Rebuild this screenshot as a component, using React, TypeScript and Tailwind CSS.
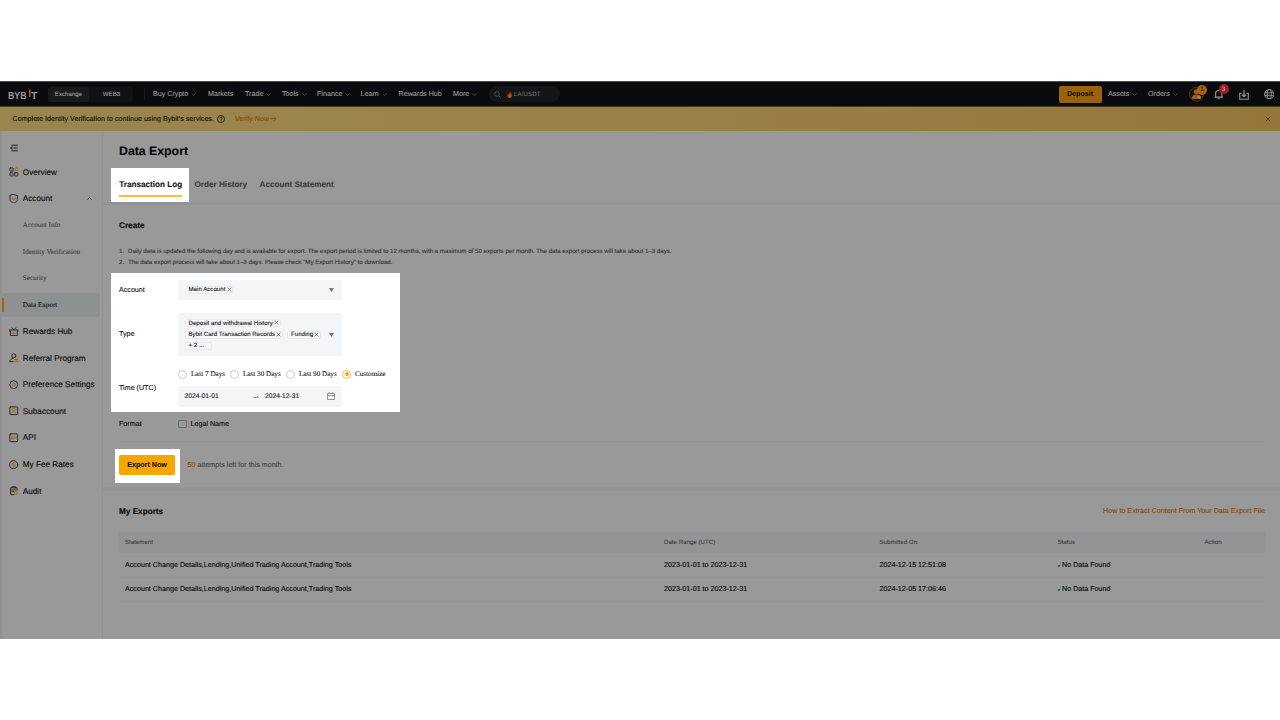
import type { ReactNode } from "react";

const stroke = {
  fill: "none",
  stroke: "#202227",
  strokeWidth: 1.55,
  strokeLinecap: "round" as const,
  strokeLinejoin: "round" as const,
};
const amber = "#b0680a";

function Icon({ children }: { children: ReactNode }) {
  return (
    <svg viewBox="0 0 16 16" className="mb-[0.5px] h-[9.5px] w-[9.5px] shrink-0" {...stroke}>
      {children}
    </svg>
  );
}

function Chevron({ up = false, className = "" }: { up?: boolean; className?: string }) {
  return (
    <svg viewBox="0 0 10 6" className={`h-[3px] w-[5px] shrink-0 ${className}`} fill="none" stroke="currentColor" strokeWidth="1.6">
      <path d={up ? "M1 5l4-4 4 4" : "M1 1l4 4 4-4"} />
    </svg>
  );
}

function Cross({ className }: { className: string }) {
  return (
    <svg viewBox="0 0 8 8" className={`shrink-0 ${className}`} fill="none" stroke="currentColor" strokeWidth="1.1">
      <path d="M1 1l6 6M7 1l-6 6" />
    </svg>
  );
}

const navItems = [
  { label: "Buy Crypto", width: "w-[55px]", menu: true },
  { label: "Markets", width: "w-[37px]", menu: false },
  { label: "Trade", width: "w-[37px]", menu: true },
  { label: "Tools", width: "w-[35px]", menu: true },
  { label: "Finance", width: "w-[43.5px]", menu: true },
  { label: "Learn", width: "w-[38px]", menu: true },
  { label: "Rewards Hub", width: "w-[54.5px]", menu: false },
  { label: "More", width: "w-[36px]", menu: true },
];

function Header() {
  return (
    <header className="flex h-[26px] items-center border-t border-b border-t-[#465048] border-b-[#453b22] bg-[#0a0b0f] text-[7.15px] text-[#999999]">
      <div className="flex w-[48px] items-center pl-[8px]">
        <svg viewBox="0 0 30 12" className="h-[12px] w-[30px] overflow-visible">
          <g fill="#999999" fontFamily="Liberation Sans" fontWeight="700" fontSize="10.2">
            <text x="0" y="11.3" textLength="18.6" lengthAdjust="spacingAndGlyphs">BYB</text>
            <text x="23" y="11.3" textLength="6.4" lengthAdjust="spacingAndGlyphs">T</text>
          </g>
          <rect x="21" y="1.5" width="1.5" height="7.5" fill="#a86a00" />
        </svg>
      </div>
      <div className="flex h-[15px] w-[85px] items-center rounded-[2px] bg-[#101114] text-[6.15px]">
        <div className="flex h-full w-[41px] items-center justify-center rounded-[2px] bg-[#191a1d] pt-[1px]">Exchange</div>
        <div className="flex-1 pt-[1px] pl-[1px] text-center">WEB3</div>
      </div>
      <div className="mr-[8.5px] ml-[10.5px] h-[12px] w-px bg-[#191a1e]" />
      <nav className="flex items-center pt-[1px]">
        {navItems.map((item) => (
          <div key={item.label} className={`flex items-center gap-[3px] whitespace-nowrap ${item.width}`}>
            {item.label}
            {item.menu && <Chevron className="text-[#4b4d51]" />}
          </div>
        ))}
      </nav>
      <div className="flex h-[16px] w-[71px] items-center rounded-full bg-[#141518] pl-[4.5px] text-[6.15px] text-[#696b70]">
        <svg viewBox="0 0 14 14" className="h-[7px] w-[7px]" fill="none" stroke="#5a5c60" strokeWidth="1.5">
          <circle cx="6" cy="6" r="4.7" />
          <path d="M9.5 9.5L13 13" />
        </svg>
        <svg viewBox="0 0 10 13" className="mr-[1.5px] ml-[6.5px] h-[7px] w-[5.5px]">
          <path d="M5.4 0C6 2.6 9.7 4.3 9.5 8.3 9.3 11.2 7.4 13 4.9 13 2.2 13 .4 11.1.4 8.5.4 6.3 1.5 5 2.3 3.9l.8 1.7C4.3 4.3 4.8 2.2 5.4 0z" fill="#a52b16" />
          <path d="M5.3 5c.2 1.7 2.4 2.6 2.2 4.7C7.4 11.5 6.3 12.5 5 12.5c-1.5 0-2.6-1-2.6-2.500C2.4 8 4.6 7.2 5.3 5z" fill="#b36a12" />
        </svg>
        <span className="pt-[1px] tracking-[0.08px]">LA/USDT</span>
      </div>
      <div className="flex-1" />
      <div className="flex h-[17px] w-[43px] items-center justify-center rounded-[2px] bg-[#9a6306] pt-[1px] font-bold text-[#17140d]">Deposit</div>
      <div className="ml-[6.5px] flex w-[40px] items-center gap-[3px] pt-[1px]">
        Assets <Chevron className="text-[#4b4d51]" />
      </div>
      <div className="flex w-[40.5px] items-center gap-[3px] pt-[1px]">
        Orders <Chevron className="text-[#4b4d51]" />
      </div>
      <div className="relative w-[25.5px]">
        <svg viewBox="0 0 16 16" className="h-[16px] w-[16px]">
          <circle cx="7.5" cy="8.3" r="7" fill="#15120d" stroke="#60400e" strokeWidth="0.8" />
          <circle cx="7.3" cy="5.8" r="2.6" fill="#a05a1c" />
          <path d="M2.800 13c-.2-3 1.500-4.600 4.300-4.600s4.700 1.500 4.500 4.600z" fill="#a05a1c" />
          <circle cx="10" cy="11.2" r="1.9" fill="#8c8375" />
        </svg>
        <span className="absolute -top-[1px] left-[8.5px] flex h-[10px] w-[10px] items-center justify-center rounded-full bg-[#a5650a] pt-[0.5px] text-[6.5px] text-[#191510]">1</span>
      </div>
      <div className="relative w-[25px]">
        <svg viewBox="0 0 18 20" className="mt-[1px] h-[10.5px] w-[9.5px]" fill="none" stroke="#999999" strokeWidth="2">
          <path d="M1 15.5h16M3 15V9a6 6 0 0 1 12 0v6M7 18.7h4" />
        </svg>
        <span className="absolute -top-[4px] left-[4.5px] flex h-[10px] w-[10px] items-center justify-center rounded-full bg-[#9b201f] pt-[0.5px] text-[6.5px] text-[#aaa]">3</span>
      </div>
      <svg viewBox="0 0 20 20" className="mt-[1px] mr-[14.5px] h-[10px] w-[10px]" fill="none" stroke="#999999" strokeWidth="2.2">
        <path d="M5.5 6.500H1.500v12h17v-12h-4M10 0v13M6 9.500l4 4 4-4" />
      </svg>
      <svg viewBox="0 0 22 22" className="mr-[6px] h-[10.5px] w-[10.5px]" fill="none" stroke="#999999" strokeWidth="1.9">
        <circle cx="11" cy="11" r="9.8" />
        <ellipse cx="11" cy="11" rx="4.5" ry="9.8" />
        <path d="M1.500 8h19M1.500 14h19" />
      </svg>
    </header>
  );
}

function Banner() {
  return (
    <div className="flex h-[24px] items-center bg-linear-to-r from-[#99874f] via-[#998149] to-[#96763b] pl-[12.5px] text-[7.15px] text-[#100f0b]">
      <span>Complete Identity Verification to continue using Bybit's services.</span>
      <svg viewBox="0 0 16 16" className="ml-[3px] h-[8px] w-[8px]" fill="none" stroke="#1d1a12" strokeWidth="1.7">
        <circle cx="8" cy="8" r="7" />
        <path d="M5.7 6.3C5.7 4.9 6.7 4 8 4s2.3.9 2.300 2.200c0 1.700-2.300 1.700-2.300 3.300M8 11v1.300" />
      </svg>
      <span className="ml-[10px] text-[#90480a]">Verify Now</span>
      <svg viewBox="0 0 12 10" className="ml-[1px] h-[5.5px] w-[6.5px]" fill="none" stroke="#90480a" strokeWidth="1.6">
        <path d="M0 5h11M7 1l4 4-4 4" />
      </svg>
      <div className="flex-1" />
      <Cross className="mr-[9px] h-[6px] w-[6px] text-[#4d3f24]" />
    </div>
  );
}

const icons: Record<string, ReactNode> = {
  Overview: (
    <>
      <rect x="1.5" y="1.5" width="5.5" height="5.5" rx="1" />
      <rect x="1.5" y="9.5" width="5.5" height="5.5" rx="1" />
      <rect x="9.5" y="9.5" width="5.5" height="5.5" rx="1" />
      <circle cx="12.2" cy="4.2" r="2.8" stroke={amber} />
    </>
  ),
  Account: (
    <>
      <path d="M8 .8l6.300 2v6.400c0 3.200-3 5-6.300 6.200-3.300-1.200-6.300-3-6.300-6.200V2.800z" />
      <path d="M5.200 7.500l2.300 2.300 3.700-3.700" stroke={amber} strokeWidth="1.800" />
    </>
  ),
  "Rewards Hub": (
    <>
      <path d="M2.500 7v7.500h11.500V7M1.300 5h13.500M1.300 5v2.500M14.800 5v2.500M8 4.500L5 1.500M8 4.500l3-3" />
      <path d="M8 8v4.500M5.800 10.200h4.400" stroke={amber} strokeWidth="1.800" />
    </>
  ),
  "Referral Program": (
    <>
      <circle cx="8" cy="4.800" r="3.500" />
      <path d="M1.500 14.500C2 11 4.300 9 7.500 8.800M1.500 14.500H7" />
      <path d="M9.500 10.800h5.500M12 9.500v5M9.500 14.500h5.500" stroke={amber} strokeWidth="1.700" />
    </>
  ),
  "Preference Settings": (
    <>
      <path d="M8 .9l2.300 1.300 2.600.5.600 2.600L15.100 8l-1.600 2.500-.6 2.700-2.600.5L8 15.100l-2.300-1.400-2.600-.5-.6-2.700L.9 8l1.600-2.700.6-2.600 2.600-.5z" />
      <circle cx="8" cy="8" r="2.600" stroke={amber} />
    </>
  ),
  Subaccount: (
    <>
      <rect x="1.500" y="1.500" width="13" height="13" rx="1" />
      <g stroke={amber}>
        <circle cx="8" cy="5.800" r="2" />
        <path d="M4.500 12c.2-2.200 1.700-3.200 3.500-3.200s3.300 1 3.500 3.200" />
      </g>
    </>
  ),
  API: (
    <>
      <rect x="1.500" y="1.500" width="13" height="13" rx="1" />
      <path d="M3.500 10l1.500-4 1.500 4M4 9h2M8 10V6h1.500v2H8M12.200 6v4" stroke={amber} strokeWidth="1.300" />
    </>
  ),
  "My Fee Rates": (
    <>
      <circle cx="8" cy="8" r="6.800" />
      <path d="M10.200 5.800C9.800 5 9 4.800 8 4.800c-1.300 0-2.200.5-2.200 1.500 0 2.200 4.600 1.200 4.600 3.400 0 1-1 1.600-2.400 1.600-1.100 0-2-.4-2.400-1.200M8 3.500v9" stroke={amber} />
    </>
  ),
  Audit: (
    <>
      <path d="M13.500 7V3h-11v11.500H8M5 3V1.300h6V3M5 6.500h6M5 9.500h3" />
      <circle cx="11.500" cy="11.800" r="2.600" stroke={amber} />
    </>
  ),
};

function SideItem({ label, open = false }: { label: string; open?: boolean }) {
  return (
    <div className="flex h-[26.6px] items-center pr-[6px] pl-[7px] text-[8.2px] whitespace-nowrap text-[#08090b]">
      <Icon>{icons[label]}</Icon>
      <span className="ml-[4.3px] flex-1 pt-[1.2px]">{label}</span>
      {open && <Chevron up className="mr-[4px] text-[#2f3033]" />}
    </div>
  );
}

function SubItem({ label, active = false }: { label: string; active?: boolean }) {
  const base = "flex items-center font-['Liberation_Serif',serif] text-[7.1px]";
  return active ? (
    <div className="flex h-[26.6px] items-center">
      <div className={`${base} h-[24px] w-[98px] rounded-[3px] bg-[#8e9192] text-[#101216]`}>
        <span className="mr-[18.8px] h-[14px] w-[2px] bg-[#a56600]" />
        {label}
      </div>
    </div>
  ) : (
    <div className={`${base} h-[26.6px] pt-[0.5px] pl-[20.8px] text-[#3e4147]`}>{label}</div>
  );
}

function Sidebar() {
  return (
    <aside className="w-[103px] shrink-0 border-r border-l-2 border-r-[#929394] border-l-[#919191]">
      <div className="flex h-[27.8px] items-center pt-[6.8px] pl-[7.5px]">
        <svg viewBox="0 0 14 14" className="h-[8px] w-[8px]" fill="none" stroke="#1c1e22" strokeWidth="1.8">
          <path d="M2.500 2h11M6 7h7.500M2.500 12h11M4.500 4.500L1 7l3.500 2.500" />
        </svg>
      </div>
      <SideItem label="Overview" />
      <SideItem label="Account" open />
      <SubItem label="Account Info" />
      <SubItem label="Identity Verification" />
      <SubItem label="Security" />
      <SubItem label="Data Export" active />
      <SideItem label="Rewards Hub" />
      <SideItem label="Referral Program" />
      <SideItem label="Preference Settings" />
      <SideItem label="Subaccount" />
      <SideItem label="API" />
      <SideItem label="My Fee Rates" />
      <SideItem label="Audit" />
    </aside>
  );
}

function Chip({ children }: { children: ReactNode }) {
  return (
    <span className="flex h-[8px] items-center gap-[1.2px] rounded-[2px] border-[0.5px] border-[#e8ebee] bg-[#f5f7f8] pr-[0.6px] pl-[3px] whitespace-nowrap text-[#1c1e23]">
      {children}
      <Cross className="mb-[0.8px] h-[5px] w-[5px] text-[#4c4f54]" />
    </span>
  );
}

function Caret() {
  return (
    <svg viewBox="0 0 10 8" className="mr-[7.5px] h-[4px] w-[5px] shrink-0">
      <path d="M0 0h10L5 8z" fill="#71757a" />
    </svg>
  );
}

function Radio({ label, width, checked = false }: { label: string; width: string; checked?: boolean }) {
  return (
    <span className={`flex items-center gap-[4px] ${width}`}>
      {checked ? (
        <span className="flex h-[9px] w-[9px] items-center justify-center rounded-full border border-[#fcc04a]">
          <span className="h-[4px] w-[4px] rounded-full bg-[#f7a600]" />
        </span>
      ) : (
        <span className="h-[9px] w-[9px] rounded-full border border-[#c8cacd]" />
      )}
      <span className="pt-[1px]">{label}</span>
    </span>
  );
}

function FilterForm() {
  return (
    <div className="ml-[8px] h-[139px] w-[289px] bg-white pl-[8px] text-[7.15px] text-[#121214]">
      <div className="flex h-[34px] items-center">
        <span className="w-[59px] pt-[1px]">Account</span>
        <div className="flex h-[20.5px] w-[163.5px] items-center justify-between rounded-[2px] bg-[#f3f5f7] pl-[6.5px] text-[6.15px]">
          <Chip>Main Account</Chip>
          <Caret />
        </div>
      </div>
      <div className="flex h-[55px] items-center">
        <span className="w-[59px]">Type</span>
        <div className="flex h-[43px] w-[163.5px] items-center justify-between rounded-[2px] bg-[#f3f5f7] pl-[6.5px] text-[6.15px]">
          <div className="flex flex-col items-start gap-[3.2px]">
            <Chip>Deposit and withdrawal History</Chip>
            <div className="flex gap-[4px]">
              <Chip>Bybit Card Transaction Records</Chip>
              <Chip>Funding</Chip>
            </div>
            <span className="flex h-[8px] w-[27px] items-center rounded-[2px] border-[0.5px] border-[#e8ebee] bg-[#f5f7f8] pl-[3px]">+ 2 ...</span>
          </div>
          <Caret />
        </div>
      </div>
      <div className="flex h-[50px] items-center">
        <span className="w-[59px] pt-[3px]">Time (UTC)</span>
        <div className="pt-[1.5px]">
          <div className="mb-[7px] flex h-[10px] items-center font-['Liberation_Serif',serif] whitespace-nowrap text-[#1c1e23]">
            <Radio label="Last 7 Days" width="w-[52px]" />
            <Radio label="Last 30 Days" width="w-[56px]" />
            <Radio label="Last 90 Days" width="w-[56px]" />
            <Radio label="Customize" width="w-[45px]" checked />
          </div>
          <div className="flex h-[20.5px] w-[163.5px] items-center rounded-[2px] bg-[#f3f5f7] pl-[6.5px] text-[6.7px] text-[#1c1e23]">
            <span className="w-[68px] pt-[1.5px]">2024-01-01</span>
            <svg viewBox="0 0 12 6" className="mr-[6.5px] h-[3px] w-[6px]" fill="none" stroke="#777a80" strokeWidth="1.4">
              <path d="M0 5h11L7.500 1.500" />
            </svg>
            <span className="w-[61.5px] pt-[1.5px]">2024-12-31</span>
            <svg viewBox="0 0 16 16" className="h-[8px] w-[8px]" fill="none" stroke="#777a80" strokeWidth="1.5">
              <path d="M1 3h14v12H1zM1 7h14M4.500 0v4M11.500 0v4" />
            </svg>
          </div>
        </div>
      </div>
    </div>
  );
}

const exportsRows = [
  { range: "2023-01-01 to 2023-12-31", submitted: "2024-12-15 12:51:08", spacing: "h-[25px] pt-[1px]" },
  { range: "2023-01-01 to 2023-12-31", submitted: "2024-12-05 17:06:46", spacing: "h-[24px]" },
];
const columns = "grid grid-cols-[539px_215.5px_178px_147px_1fr] items-center pl-[6px]";

function Main() {
  return (
    <main className="flex min-w-0 flex-1 flex-col">
      <section className="h-[70px]">
        <h1 className="flex h-[37px] items-center pt-[4px] pl-[16px] text-[12.3px] font-bold text-[#060709]">Data Export</h1>
        <div className="flex h-[34px] items-start pl-[8px] text-[8.17px] font-bold whitespace-nowrap text-[#3a3c41]">
          <div className="flex h-[34px] w-[78px] flex-col bg-white pl-[8.2px] text-[#121214]">
            <span className="flex h-[27px] items-center pt-[6.5px]">Transaction Log</span>
            <span className="h-[1.5px] w-[63px] bg-[#fbb944]" />
          </div>
          <span className="ml-[5.5px] flex h-[27px] w-[65px] items-center pt-[6.5px]">Order History</span>
          <span className="flex h-[27px] items-center pt-[6.5px]">Account Statement</span>
        </div>
      </section>
      <div className="mt-[1px] h-[3px] bg-[#929496]" />
      <section className="h-[282px]">
        <h2 className="flex h-[40px] items-center pt-[2px] pl-[16px] text-[8.2px] font-bold text-[#060709]">Create</h2>
        <ol className="h-[28px] pt-[1px] pl-[16px] text-[6.15px] leading-[11.2px] text-[#33353a]">
          <li className="flex">
            <span className="w-[9px]">1.</span>
            Daily data is updated the following day and is available for export. The export period is limited to 12 months, with a maximum of 50 exports per month. The data export process will take about 1–3 days.
          </li>
          <li className="flex">
            <span className="w-[9px]">2.</span>
            The data export process will take about 1–3 days. Please check "My Export History" to download.
          </li>
        </ol>
        <FilterForm />
        <div className="mr-[15px] ml-[16px] flex h-[30px] items-center border-b border-[#939393] pb-[5px] text-[7.15px] text-[#0b0c0f]">
          <span className="w-[59px]">Format</span>
          <span className="mr-[4px] h-[8.5px] w-[8.5px] rounded-[1px] border border-[#68696b]" />
          Legal Name
        </div>
        <div className="mt-[7px] flex items-center pl-[12px]">
          <div className="flex h-[34px] w-[65px] items-center bg-white pb-[3px] pl-[4px]">
            <button className="h-[20px] w-[56px] rounded-[2px] bg-[#f7a600] pt-[1px] text-[7.15px] font-bold text-[#121214]">Export Now</button>
          </div>
          <span className="ml-[7.5px] pb-[2px] text-[7.15px] text-[#414348]">
            <span className="text-[#8a470a]">50</span> attempts left for this month.
          </span>
        </div>
      </section>
      <div className="h-[4px] bg-[#929496]" />
      <section className="pr-[15px] pl-[16px]">
        <div className="flex h-[41px] items-center justify-between pt-[1px]">
          <h2 className="text-[8.2px] font-bold text-[#060709]">My Exports</h2>
          <a className="pb-[1px] text-[7.17px] text-[#8a470a]">How to Extract Content From Your Data Export File</a>
        </div>
        <div className={`${columns} h-[21px] bg-[#929496] text-[6.15px] text-[#3e4146]`}>
          <span>Statement</span>
          <span>Date Range (UTC)</span>
          <span>Submitted On</span>
          <span>Status</span>
          <span>Action</span>
        </div>
        {exportsRows.map((row) => (
          <div key={row.submitted} className={`${columns} ${row.spacing} border-b border-[#939495] text-[7.17px] text-[#060709]`}>
            <span>Account Change Details,Lending,Unified Trading Account,Trading Tools</span>
            <span>{row.range}</span>
            <span>{row.submitted}</span>
            <span className="flex items-center gap-[2.5px]">
              <i className="h-[2px] w-[2px] bg-[#137a46]" />
              No Data Found
            </span>
          </div>
        ))}
      </section>
    </main>
  );
}

export default function App() {
  return (
    <div className="h-[720px] w-[1280px] overflow-hidden bg-white pt-[81px] font-['Liberation_Sans',Arial,sans-serif] [-webkit-text-stroke:0.12px] [text-rendering:geometricPrecision]">
      <div className="flex h-[558px] flex-col bg-[#999999]">
        <Header />
        <Banner />
        <div className="flex flex-1">
          <Sidebar />
          <Main />
        </div>
      </div>
    </div>
  );
}
